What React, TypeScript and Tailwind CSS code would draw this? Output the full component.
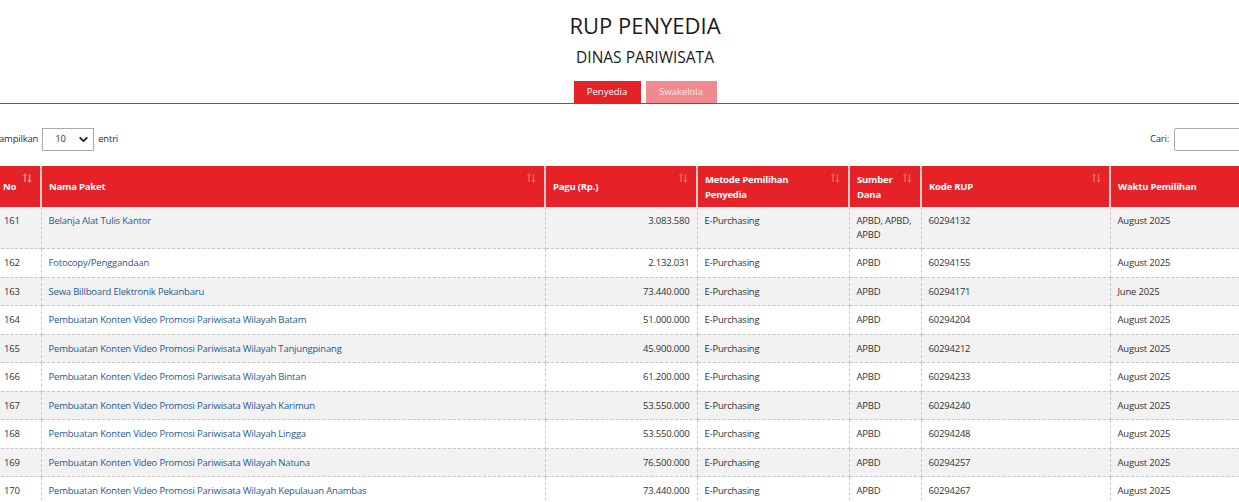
import { ChevronDown } from "lucide-react";

type Row = {
  no: number;
  nama: string;
  pagu: string;
  metode: string;
  sumber: string;
  kode: string;
  waktu: string;
};

const rows: Row[] = [
  { no: 161, nama: "Belanja Alat Tulis Kantor", pagu: "3.083.580", metode: "E-Purchasing", sumber: "APBD, APBD, APBD", kode: "60294132", waktu: "August 2025" },
  { no: 162, nama: "Fotocopy/Penggandaan", pagu: "2.132.031", metode: "E-Purchasing", sumber: "APBD", kode: "60294155", waktu: "August 2025" },
  { no: 163, nama: "Sewa Billboard Elektronik Pekanbaru", pagu: "73.440.000", metode: "E-Purchasing", sumber: "APBD", kode: "60294171", waktu: "June 2025" },
  { no: 164, nama: "Pembuatan Konten Video Promosi Pariwisata Wilayah Batam", pagu: "51.000.000", metode: "E-Purchasing", sumber: "APBD", kode: "60294204", waktu: "August 2025" },
  { no: 165, nama: "Pembuatan Konten Video Promosi Pariwisata Wilayah Tanjungpinang", pagu: "45.900.000", metode: "E-Purchasing", sumber: "APBD", kode: "60294212", waktu: "August 2025" },
  { no: 166, nama: "Pembuatan Konten Video Promosi Pariwisata Wilayah Bintan", pagu: "61.200.000", metode: "E-Purchasing", sumber: "APBD", kode: "60294233", waktu: "August 2025" },
  { no: 167, nama: "Pembuatan Konten Video Promosi Pariwisata Wilayah Karimun", pagu: "53.550.000", metode: "E-Purchasing", sumber: "APBD", kode: "60294240", waktu: "August 2025" },
  { no: 168, nama: "Pembuatan Konten Video Promosi Pariwisata Wilayah Lingga", pagu: "53.550.000", metode: "E-Purchasing", sumber: "APBD", kode: "60294248", waktu: "August 2025" },
  { no: 169, nama: "Pembuatan Konten Video Promosi Pariwisata Wilayah Natuna", pagu: "76.500.000", metode: "E-Purchasing", sumber: "APBD", kode: "60294257", waktu: "August 2025" },
  { no: 170, nama: "Pembuatan Konten Video Promosi Pariwisata Wilayah Kepulauan Anambas", pagu: "73.440.000", metode: "E-Purchasing", sumber: "APBD", kode: "60294267", waktu: "August 2025" },
];

// little up/down arrows used by the sortable headers
const SortIcon = ({ active }: { active?: boolean }) => (
  <svg width="9" height="10" viewBox="0 0 9 10" className="absolute right-[8px] top-[7px]">
    <g fill={active ? "rgba(255,255,255,0.55)" : "rgba(255,255,255,0.3)"}>
      <path d="M2 0 L4 3 L2.7 3 L2.7 9 L1.3 9 L1.3 3 L0 3 Z" />
      <path d="M6.5 10 L4.5 7 L5.8 7 L5.8 1 L7.2 1 L7.2 7 L8.5 7 Z" />
    </g>
  </svg>
);

const Th = ({ children, w, sort = true, active }: { children: React.ReactNode; w: string; sort?: boolean; active?: boolean }) => (
  <th className={`relative ${w} px-[7px] py-[5px] text-left align-middle text-[9.5px] leading-[15px] tracking-[-0.2px] font-bold text-white border-r-2 border-[#f3c9cb] last:border-r-0`}>
    {children}
    {sort && <SortIcon active={active} />}
  </th>
);

const td = "px-[7px] py-[7px] align-top border-b border-r border-dashed border-[#c8c8c8]";

export default function App() {
  return (
    <div className="w-[1239px] h-[502px] overflow-hidden bg-white text-[#333]" style={{ fontFamily: '"Open Sans", "Noto Sans", sans-serif' }}>
      <div className="w-[1290px] flex flex-col items-center pt-[10px]">
        <h1 className="text-[22px] leading-[30px] text-[#1a1a1a]">RUP PENYEDIA</h1>
        <h2 className="mt-[7px] text-[15.5px] leading-[20px] text-[#1a1a1a]">DINAS PARIWISATA</h2>
        <div className="mt-[14px] flex gap-[5px]">
          <button className="w-[67px] h-[22px] bg-[#e52228] text-white text-[9.5px]">Penyedia</button>
          <button className="w-[71px] h-[22px] bg-[#f08a8f] text-[#fde3e4] text-[9.5px]">Swakelola</button>
        </div>
      </div>
      <div className="border-t border-[#e0252c]" />

      <div className="-ml-[6px] mt-[24px] flex items-center justify-between text-[9.5px] tracking-[-0.2px]">
        <div className="flex items-center gap-[4px]">
          <span>Tampilkan</span>
          <div className="w-[52px] h-[23px] border border-[#aaa] flex items-center justify-between pl-[12px] pr-[3px]">
            <span>10</span>
            <ChevronDown size={13} strokeWidth={3.5} className="text-[#222]" />
          </div>
          <span>entri</span>
        </div>
        <div className="flex items-center gap-[5px] mr-[-30px]">
          <span>Cari:</span>
          <div className="w-[95px] h-[23px] border border-[#aaa] rounded-[2px]" />
        </div>
      </div>

      <table className="-ml-[4px] mt-[15px] border-collapse table-fixed w-[1404px]">
        <thead>
          <tr className="bg-[#e52228] h-[41px]">
            <Th w="w-[45px]" active>No</Th>
            <Th w="w-[504px]">Nama Paket</Th>
            <Th w="w-[152px]">Pagu (Rp.)</Th>
            <Th w="w-[152px]">Metode Pemilihan<br />Penyedia</Th>
            <Th w="w-[72px]">Sumber<br />Dana</Th>
            <Th w="w-[189px]">Kode RUP</Th>
            <Th w="w-[290px]" sort={false}>Waktu Pemilihan</Th>
          </tr>
        </thead>
        <tbody className="text-[9.5px] leading-[13.5px] tracking-[-0.2px]">
          {rows.map((r, i) => (
            <tr key={r.no} className={i % 2 === 0 ? "bg-[#f2f2f2]" : "bg-white"}>
              <td className={`${td} px-[8px]`}>{r.no}</td>
              <td className={`${td} text-[#1f5a94]`}>{r.nama}</td>
              <td className={`${td} text-right`}>{r.pagu}</td>
              <td className={td}>{r.metode}</td>
              <td className={`${td} pr-[4px]`}>{r.sumber}</td>
              <td className={td}>{r.kode}</td>
              <td className={`${td} border-r-0`}>{r.waktu}</td>
            </tr>
          ))}
        </tbody>
      </table>
    </div>
  );
}
